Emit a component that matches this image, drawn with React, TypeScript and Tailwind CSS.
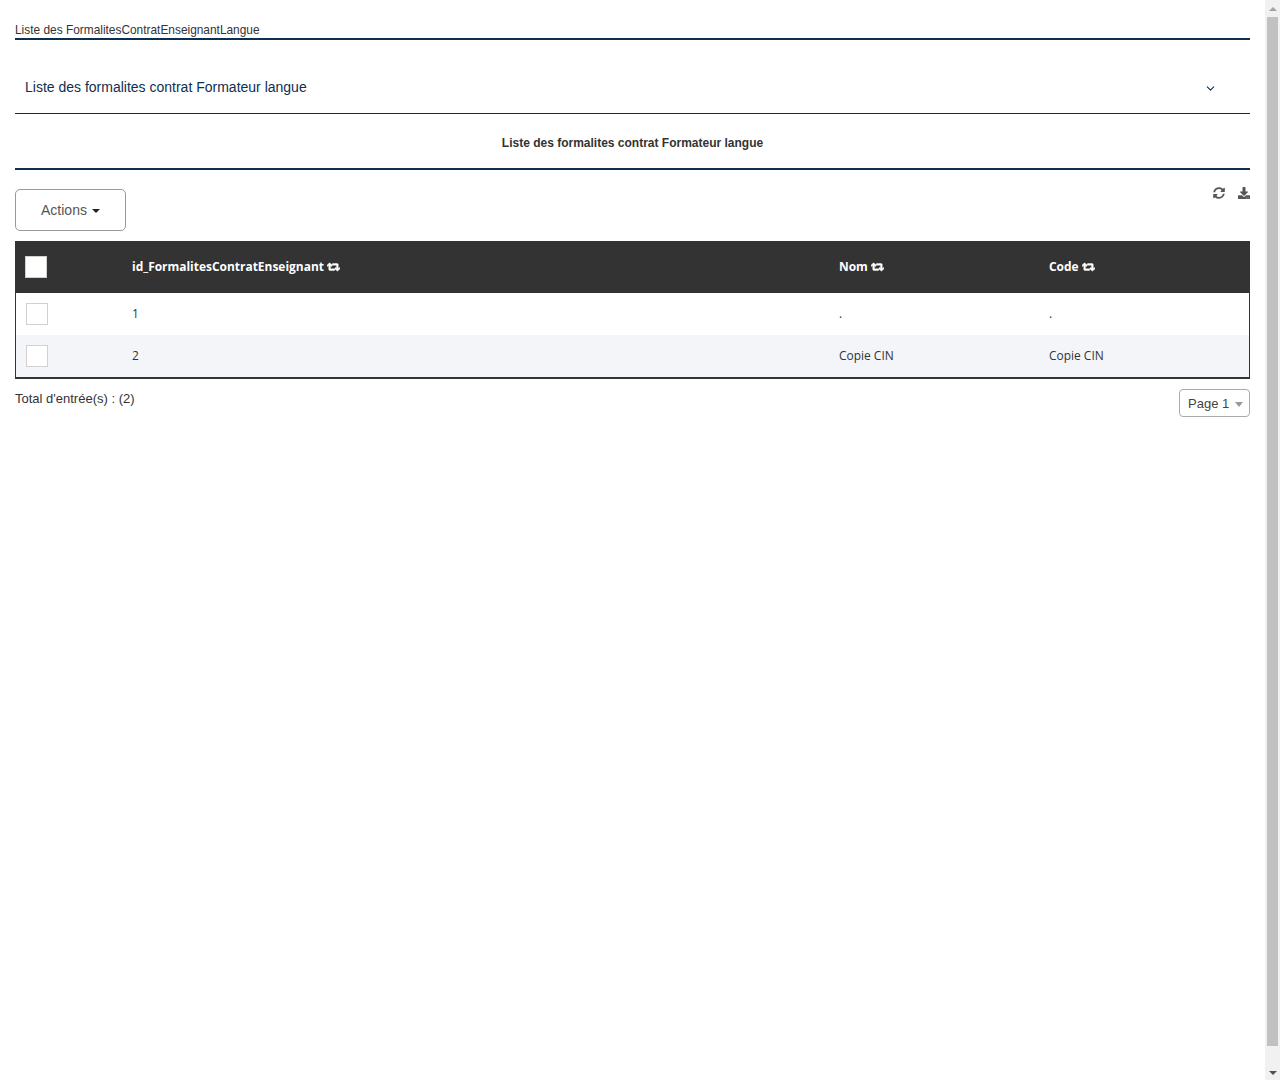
import { FaDownload, FaRetweet, FaSyncAlt } from "react-icons/fa";
import { LuChevronDown } from "react-icons/lu";

const colonnes = [
  { label: "id_FormalitesContratEnseignant", className: "w-[707px]" },
  { label: "Nom", className: "w-[210px]" },
  { label: "Code", className: "flex-1" },
];

const lignes = [
  { id: "1", nom: ".", code: ".", fond: "bg-white" },
  { id: "2", nom: "Copie CIN", code: "Copie CIN", fond: "bg-[#f4f5f9]" },
];

function Scrollbar() {
  return (
    <div className="flex h-[1080px] w-[15px] shrink-0 flex-col items-center justify-between bg-[#f1f1f1]">
      <div className="flex h-[17px] items-center justify-center">
        <div className="h-0 w-0 border-x-[4px] border-b-[4px] border-x-transparent border-b-[#a3a3a3]" />
      </div>
      <div className="h-[1029px] w-[11px] bg-[#c1c1c1]" />
      <div className="flex h-[17px] flex-1 items-end justify-center pb-[5px]">
        <div className="h-0 w-0 border-x-[4px] border-t-[4px] border-x-transparent border-t-[#505050]" />
      </div>
    </div>
  );
}

export default function App() {
  return (
    <div className="flex h-[1080px] overflow-hidden bg-white font-['Liberation_Sans',sans-serif] text-[#333333]">
      <main className="min-w-0 flex-1 px-[15px]">
        <h1 className="mt-[23px] h-[17px] border-b-2 border-[#0f2f50] text-[11.9px] leading-[14px] font-normal">
          Liste des FormalitesContratEnseignantLangue
        </h1>

        <div className="flex h-[74px] items-center justify-between border-b border-[#0f2f50] pt-[21px] pr-[33px] pl-[10px] text-[14px] text-[#0f2f50]">
          <span>Liste des formalites contrat Formateur langue</span>
          <LuChevronDown className="mt-[2px] h-[13px] w-[13px]" strokeWidth={2} />
        </div>

        <h2 className="flex h-[56px] items-center justify-center border-b-2 border-[#0f2f50] pt-[4px] text-[12px] font-bold">
          Liste des formalites contrat Formateur langue
        </h2>

        <div className="mt-[19px] flex items-start justify-between">
          <button
            type="button"
            className="flex h-[42px] w-[111px] items-center justify-center gap-[5px] rounded-[5px] border border-[#999999] text-[14px] text-[#555555]"
          >
            Actions
            <span className="mt-[2px] h-0 w-0 border-x-[4px] border-t-[4px] border-x-transparent border-t-[#222222]" />
          </button>
          <div className="mt-[-2px] flex items-center gap-[13px] text-[#555555]">
            <FaSyncAlt className="h-[12px] w-[12px]" />
            <FaDownload className="h-[12px] w-[12px]" />
          </div>
        </div>

        <div className="mt-[10px] border-x border-b-2 border-x-[#333333] border-b-[#333333] font-['Open_Sans',sans-serif] text-[11.96px]">
          <div className="mx-[-1px] flex h-[52px] items-center bg-[#333333] font-bold text-white">
            <div className="w-[117px] pl-[10px]">
              <div className="h-[22px] w-[22px] border border-[#d5d0cb] bg-white" />
            </div>
            {colonnes.map((colonne) => (
              <div key={colonne.label} className={`flex items-center gap-[3px] ${colonne.className}`}>
                {colonne.label}
                <FaRetweet className="h-[12px] w-[13px]" stroke="currentColor" strokeWidth={40} />
              </div>
            ))}
          </div>
          {lignes.map((ligne) => (
            <div key={ligne.id} className={`flex h-[42px] items-center ${ligne.fond}`}>
              <div className="w-[116px] pl-[10px]">
                <div className="h-[22px] w-[22px] border border-[#d5d0cb] bg-white" />
              </div>
              <div className="w-[707px]">{ligne.id}</div>
              <div className="w-[210px]">{ligne.nom}</div>
              <div className="flex-1">{ligne.code}</div>
            </div>
          ))}
        </div>

        <div className="mt-[10px] flex items-start justify-between text-[13px]">
          <span>Total d'entrée(s) : (2)</span>
          <div className="flex h-[28px] w-[71px] items-center justify-between rounded-[4px] border border-[#aaaaaa] pt-[2px] pr-[6px] pl-[8px] text-[#444444]">
            Page 1
            <span className="h-0 w-0 border-x-[4px] border-t-[5px] border-x-transparent border-t-[#999999]" />
          </div>
        </div>
      </main>
      <Scrollbar />
    </div>
  );
}
